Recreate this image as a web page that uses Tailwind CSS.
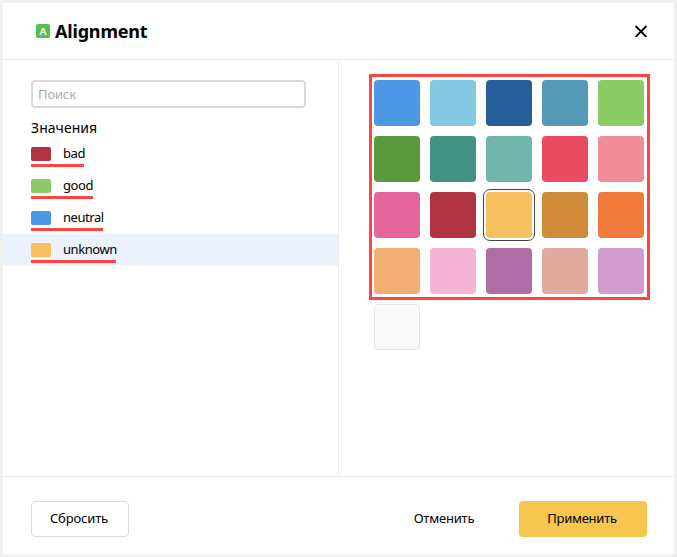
<!DOCTYPE html>
<html lang="ru">
<head>
<meta charset="utf-8">
<title>Alignment</title>
<script src="https://cdn.jsdelivr.net/npm/@tailwindcss/browser@4"></script>
</head>
<body class="h-[557px] w-[677px] overflow-hidden bg-[#f0f0f0] p-[3px] font-['Noto_Sans',sans-serif] text-[13px] text-black">
<div class="flex h-[551px] w-[671px] flex-col bg-white">
  <header class="flex h-[57px] shrink-0 items-center border-b border-[#ebebeb] pl-[33px] pr-[27px]">
    <span class="flex size-[14px] items-center justify-center rounded-[2px] bg-[#57bf51] font-['Lato',sans-serif] text-[10px] leading-none font-bold text-white">A</span>
    <h1 class="ml-[5px] text-[18px] leading-6 font-bold tracking-[-0.18px]">Alignment</h1>
    <button class="ml-auto" aria-label="Закрыть">
      <svg class="block" width="12" height="12" viewBox="0 0 12 12" fill="none" stroke="#000" stroke-width="1.8"><path d="M.6 1 11.4 12M11.4 1 .6 12"/></svg>
    </button>
  </header>
  <main class="flex min-h-0 flex-1">
    <section class="w-[336px] shrink-0 border-r border-[#ebebeb] pt-5">
      <div class="ml-7 flex h-7 w-[275px] items-center rounded-[4px] border-2 border-[#d9d9d9] pl-[5px] pt-px tracking-[-0.15px] text-[#aaa]">Поиск</div>
      <h2 class="ml-7 flex h-[30px] items-center pt-[9px] text-[14px] leading-5 tracking-[0.05px]">Значения</h2>
      <ul class="tracking-[-0.45px]">
        <li class="flex h-8 pl-7 pt-[9px]"><div class="flex h-5 w-[53px] gap-[12px] border-b-3 border-[#ff4444]"><i class="h-[14px] w-5 shrink-0 rounded-[2px] bg-[#af3340]"></i><span class="leading-[12px]">bad</span></div></li>
        <li class="flex h-8 pl-7 pt-[9px]"><div class="flex h-5 w-[62px] gap-[12px] border-b-3 border-[#ff4444]"><i class="h-[14px] w-5 shrink-0 rounded-[2px] bg-[#8acb66]"></i><span class="leading-[12px]">good</span></div></li>
        <li class="flex h-8 pl-7 pt-[9px]"><div class="flex h-5 w-[72px] gap-[12px] border-b-3 border-[#ff4444]"><i class="h-[14px] w-5 shrink-0 rounded-[2px] bg-[#4c98e4]"></i><span class="leading-[12px]">neutral</span></div></li>
        <li class="flex h-8 bg-[#ebf2fd] pl-7 pt-[9px]"><div class="flex h-5 w-[85px] gap-[12px] border-b-3 border-[#ff4444]"><i class="h-[14px] w-5 shrink-0 rounded-[2px] bg-[#f6c05e]"></i><span class="leading-[12px]">unknown</span></div></li>
      </ul>
    </section>
    <section class="pl-[30px] pt-[14px]">
      <div class="grid h-[226px] w-[281px] grid-cols-[repeat(5,46px)] grid-rows-[repeat(4,46px)] gap-[10px] border-3 border-[#ff4444] pl-[2px] pt-[3px]">
        <i class="rounded-[4px] bg-[#4c98e4]"></i>
        <i class="rounded-[4px] bg-[#84c8e4]"></i>
        <i class="rounded-[4px] bg-[#255e99]"></i>
        <i class="rounded-[4px] bg-[#549ab7]"></i>
        <i class="rounded-[4px] bg-[#8acb66]"></i>
        <i class="rounded-[4px] bg-[#5a993d]"></i>
        <i class="rounded-[4px] bg-[#429283]"></i>
        <i class="rounded-[4px] bg-[#70b6a9]"></i>
        <i class="rounded-[4px] bg-[#eb4b62]"></i>
        <i class="rounded-[4px] bg-[#f38c99]"></i>
        <i class="rounded-[4px] bg-[#e5669a]"></i>
        <i class="rounded-[4px] bg-[#af3340]"></i>
        <i class="rounded-[4px] bg-[#f6c05e] outline outline-offset-2 outline-[#444]"></i>
        <i class="rounded-[4px] bg-[#d08a3a]"></i>
        <i class="rounded-[4px] bg-[#f07a3c]"></i>
        <i class="rounded-[4px] bg-[#f3ae75]"></i>
        <i class="rounded-[4px] bg-[#f4b4d4]"></i>
        <i class="rounded-[4px] bg-[#ae6ea5]"></i>
        <i class="rounded-[4px] bg-[#e0aa9e]"></i>
        <i class="rounded-[4px] bg-[#d29bce]"></i>
      </div>
      <div class="ml-[5px] mt-1 size-[46px] rounded-[4px] border border-[#e5e5e5] bg-[#f9f9f9]"></div>
    </section>
  </main>
  <footer class="flex h-[78px] shrink-0 items-start border-t border-[#ebebeb] pl-7 pr-[27px] pt-6">
    <button class="h-9 w-[98px] rounded-[4px] border border-[#d9d9d9] pr-[2px] pb-px tracking-[-0.15px]">Сбросить</button>
    <button class="ml-auto h-9 w-[110px] pb-px tracking-[-0.2px]">Отменить</button>
    <button class="ml-[20px] h-9 w-[128px] rounded-[4px] bg-[#f7c650] pr-[2px] pb-px tracking-[-0.25px]">Применить</button>
  </footer>
</div>
</body>
</html>
